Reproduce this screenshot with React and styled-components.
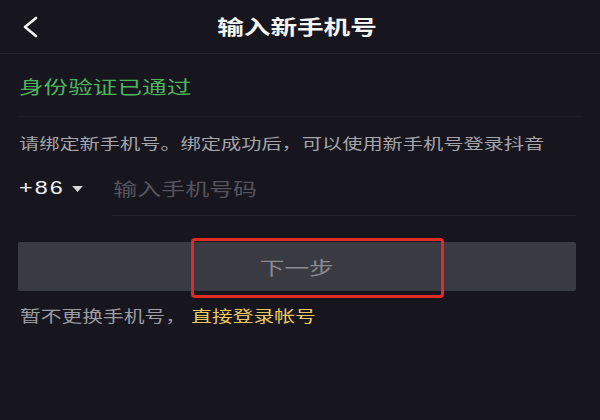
import React from 'react';
import styled, { createGlobalStyle } from 'styled-components';

// the screenshot is stretched sideways, so the text is widened to match
const WIDE = 1.33;

const GlobalStyle = createGlobalStyle`
    html, body {
        margin: 0;
        padding: 0;
        background: #17161e;
    }
    body {
        font-family: 'Noto Sans CJK SC', 'Noto Sans', sans-serif;
    }
`

const BackIcon = () => (
    <svg width="18" height="22" viewBox="0 0 18 22" fill="none">
        <path d="M15 2 L4 11 L15 20" stroke="#f2f2f2" strokeWidth="2.6" strokeLinecap="round" strokeLinejoin="round" />
    </svg>
);

const App = () => {
    return (
        <Page>
            <GlobalStyle />
            <Header>
                <BackButton><BackIcon /></BackButton>
                <Title>输入新手机号</Title>
                <span />
            </Header>
            <Content>
                <VerifiedBlock>
                    <Verified>身份验证已通过</Verified>
                </VerifiedBlock>
                <Hint>请绑定新手机号。绑定成功后，可以使用新手机号登录抖音</Hint>
                <PhoneRow>
                    <Country>
                        <CountryInner>
                            <CountryCode>+86</CountryCode>
                            <Caret />
                        </CountryInner>
                    </Country>
                    <InputWrap>
                        <PhoneInput placeholder="输入手机号码" />
                    </InputWrap>
                </PhoneRow>
                <ButtonArea>
                    <NextButton><ButtonLabel>下一步</ButtonLabel></NextButton>
                    <Highlight />
                </ButtonArea>
                <Footer>
                    暂不更换手机号，<FooterLink>直接登录帐号</FooterLink>
                </Footer>
            </Content>
        </Page>
    )
};

export default App;

const Page = styled.div`
    width: 600px;
    height: 420px;
    background: #17161e;
    overflow: hidden;
`

const Header = styled.div`
    display: grid;
    grid-template-columns: 1fr auto 1fr;
    align-items: center;
    height: 53px;
    border-bottom: 1px solid #23222b;
`

const BackButton = styled.div`
    display: flex;
    align-items: center;
    padding-left: 21px;
    padding-top: 1px;
`

const Title = styled.h1`
    margin: 0;
    font-size: 20px;
    font-weight: 700;
    color: #f4f4f4;
    line-height: 26px;
    transform: translateX(-3px) scaleX(${WIDE});
`

const Content = styled.div`
    padding: 0 24px 0 18px;
`

const VerifiedBlock = styled.div`
    padding: 20px 0 18px 1px;
    border-bottom: 1px solid #1e1d26;
    margin-right: -6px;
`

const Verified = styled.div`
    font-size: 18.5px;
    line-height: 24px;
    color: #4db35e;
    transform: scaleX(${WIDE});
    transform-origin: left center;
`

const Hint = styled.p`
    margin: 14px 0 0 1px;
    font-size: 15.2px;
    line-height: 22px;
    color: #a4a4ab;
    white-space: nowrap;
    transform: scaleX(${WIDE});
    transform-origin: left center;
`

const PhoneRow = styled.div`
    display: flex;
    align-items: stretch;
    margin-top: 7px;
    height: 56px;
`

const Country = styled.div`
    display: flex;
    align-items: center;
    width: 94px;
    padding-left: 1px;
    box-sizing: border-box;
`

const CountryInner = styled.div`
    display: flex;
    align-items: center;
    transform: scaleX(${WIDE});
    transform-origin: left center;
`

const CountryCode = styled.span`
    font-family: 'Liberation Sans', Arial, sans-serif;
    font-size: 17.5px;
    letter-spacing: 1.6px;
    color: #f0f0f0;
`

const Caret = styled.span`
    width: 0;
    height: 0;
    margin-left: 5px;
    margin-top: 1px;
    border-left: 4.5px solid transparent;
    border-right: 4.5px solid transparent;
    border-top: 6px solid #d8d8dc;
`

const InputWrap = styled.div`
    flex: 1;
    display: flex;
    align-items: center;
    border-bottom: 1px solid #25242d;
    overflow: hidden;
`

const PhoneInput = styled.input`
    width: 100%;
    background: transparent;
    border: none;
    outline: none;
    padding: 0 0 0 1px;
    font-family: 'Noto Sans CJK SC', sans-serif;
    font-size: 18px;
    color: #f0f0f0;
    transform: scaleX(${WIDE});
    transform-origin: left center;

    &::placeholder {
        color: #55545d;
    }
`

const ButtonArea = styled.div`
    position: relative;
    margin-top: 26px;
`

const NextButton = styled.button`
    display: flex;
    align-items: center;
    justify-content: center;
    width: 100%;
    height: 49px;
    padding: 0;
    border: none;
    border-radius: 2px;
    background: #3a3a42;
    cursor: pointer;
`

const ButtonLabel = styled.span`
    display: inline-block;
    font-family: 'Noto Sans CJK SC', sans-serif;
    font-size: 18.5px;
    color: #8a8a91;
    transform: scaleX(${WIDE});
`

const Highlight = styled.div`
    position: absolute;
    left: 173px;
    top: -4px;
    width: 253px;
    height: 60px;
    box-sizing: border-box;
    border: 3px solid #e02a28;
    border-radius: 4px;
    pointer-events: none;
`

const Footer = styled.p`
    margin: 13px 0 0 2px;
    font-size: 15.6px;
    line-height: 22px;
    color: #9c9ca3;
    white-space: nowrap;
    transform: scaleX(${WIDE});
    transform-origin: left center;
`

const FooterLink = styled.span`
    margin-left: 4px;
    color: #e9c95f;
    cursor: pointer;
`
